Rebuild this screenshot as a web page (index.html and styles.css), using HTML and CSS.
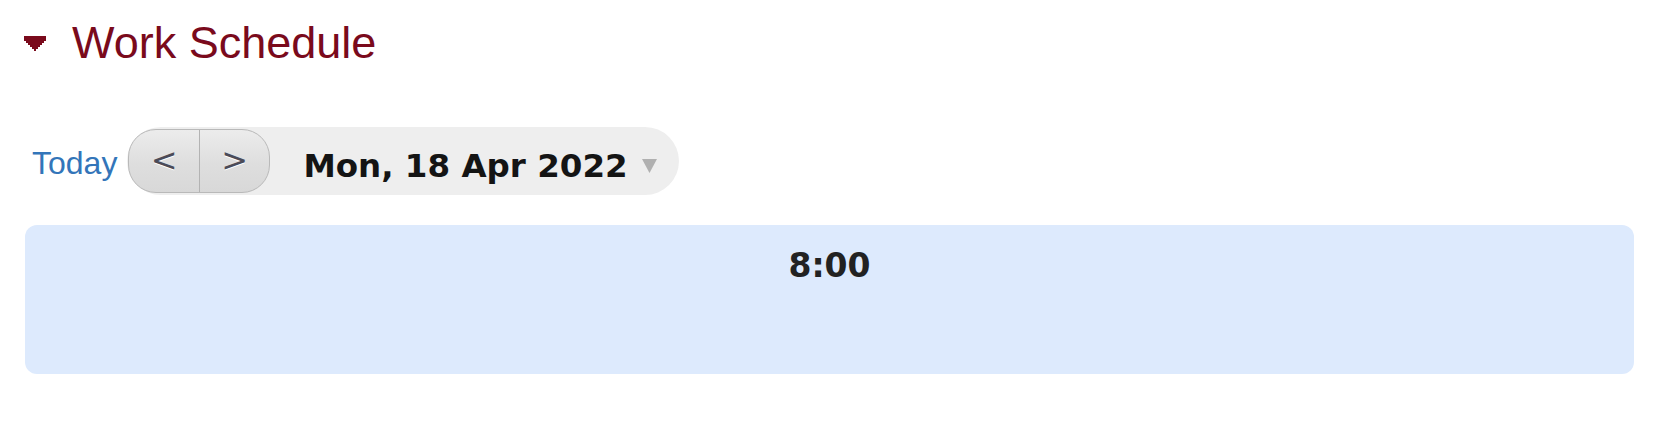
FILE: index.html
```html
<!DOCTYPE html>
<html lang="en">
<head>
<meta charset="utf-8">
<title>Work Schedule</title>
<link rel="stylesheet" href="styles.css">
</head>
<body>
<section class="section">
  <div class="section-head">
    <svg class="caret" width="22" height="15" viewBox="0 0 22 15" aria-hidden="true">
      <polygon points="0,0 22,0 22,5 20,5 20,7 18,7 18,9 16,9 16,11 14,11 14,13 12,13 12,15 10,15 10,13 8,13 8,11 6,11 6,9 4,9 4,7 2,7 2,5 0,5" fill="#7a0a1c"/>
    </svg>
    <h2 class="title">Work Schedule</h2>
  </div>
  <div class="toolbar">
    <a class="today" href="#">Today</a>
    <div class="datepicker">
      <div class="nav">
        <button class="nav-btn" type="button">&lt;</button>
        <button class="nav-btn nav-btn-next" type="button">&gt;</button>
      </div>
      <span class="date">Mon, 18 Apr 2022</span>
      <svg class="drop" width="15" height="14" viewBox="0 0 15 14" aria-hidden="true">
        <polygon points="0,0 15,0 7.5,14" fill="#b0b0b0"/>
      </svg>
    </div>
  </div>
  <div class="schedule">
    <div class="time">8:00</div>
  </div>
</section>
</body>
</html>
```
FILE: styles.css
```css
html, body {
  margin: 0;
  padding: 0;
  background: #ffffff;
}

.section {
  display: flex;
  flex-direction: column;
}

.section-head {
  display: flex;
  align-items: center;
  height: 44px;
  margin-top: 21px;
  padding-left: 24px;
}

.caret {
  display: block;
  flex: none;
}

.title {
  margin: 0 0 0 26px;
  font-family: "Liberation Sans", Arial, sans-serif;
  font-weight: normal;
  font-size: 45px;
  line-height: 44px;
  color: #7a0a1c;
}

.toolbar {
  display: flex;
  align-items: center;
  margin-top: 62px;
  padding-left: 32px;
}

.today {
  font-family: "Liberation Sans", Arial, sans-serif;
  font-size: 32px;
  color: #3375b9;
  text-decoration: none;
  padding-top: 4px;
  margin-right: 10px;
}

.datepicker {
  display: flex;
  flex: none;
  align-items: center;
  height: 68px;
  box-sizing: border-box;
  padding: 2px 22px 2px 1px;
  background: #eeeeee;
  border-radius: 34px;
}

.nav {
  display: flex;
  flex: none;
  height: 64px;
  width: 142px;
  box-sizing: border-box;
  border: 1px solid #b9b9b9;
  border-radius: 28px;
  overflow: hidden;
  background: linear-gradient(#ececec, #dedede 55%, #d8d8d8);
}

.nav-btn {
  flex: 1;
  margin: 0;
  padding: 0 0 2px 0;
  border: none;
  background: transparent;
  font-family: "DejaVu Sans", Verdana, sans-serif;
  font-size: 32px;
  color: #4b4b58;
  text-shadow: 0 1px 0 #ffffff;
  cursor: pointer;
}

.nav-btn-next {
  border-left: 1px solid #b3b3b3;
}

.date {
  flex: none;
  white-space: nowrap;
  margin-left: 33px;
  font-family: "DejaVu Sans", Verdana, sans-serif;
  font-weight: bold;
  font-size: 32.5px;
  color: #141414;
  padding-top: 10px;
}

.drop {
  display: block;
  flex: none;
  margin-left: 14px;
  margin-top: 10px;
}

.schedule {
  margin: 30px 22px 0 25px;
  height: 149px;
  box-sizing: border-box;
  padding-top: 21px;
  background: #ddeafd;
  border-radius: 12px;
  text-align: center;
}

.time {
  font-family: "DejaVu Sans", Verdana, sans-serif;
  font-weight: bold;
  font-size: 33px;
  color: #222222;
}
```
